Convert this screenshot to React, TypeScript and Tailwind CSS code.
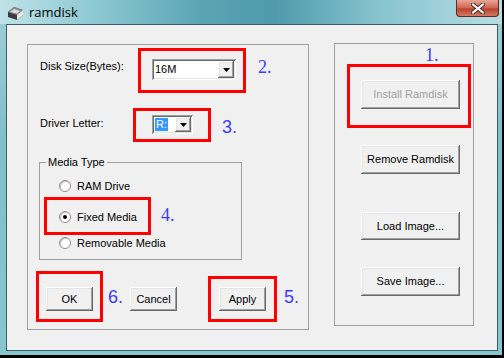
import React from "react"

const font = { fontFamily: '"Liberation Sans", Arial, sans-serif' }

function Btn({ label, className, disabled }: { label: string; className: string; disabled?: boolean }) {
  return (
    <div
      className={`flex items-center justify-center bg-[#f0f0f0] text-[11px] leading-[13px] shadow-[inset_-1px_-1px_0_#696969,inset_1px_1px_0_#ffffff,inset_-2px_-2px_0_#a0a0a0,inset_2px_2px_0_#e3e3e3] ${
        disabled ? "text-[#a0a0a0]" : "text-black"
      } ${className}`}
    >
      {label}
    </div>
  )
}

function DropArrow() {
  return (
    <div className="flex h-full w-[16px] items-center justify-center bg-[#f0f0f0] shadow-[inset_-1px_-1px_0_#696969,inset_1px_1px_0_#ffffff,inset_-2px_-2px_0_#a0a0a0,inset_2px_2px_0_#e3e3e3]">
      <svg width="7" height="4" viewBox="0 0 7 4">
        <path d="M0 0h7L3.5 4z" fill="#000" />
      </svg>
    </div>
  )
}

function Combo({ value, w, h, selected }: { value: string; w: string; h: string; selected?: boolean }) {
  return (
    <div className={`flex ${w} ${h} items-stretch bg-white p-[2px] shadow-[inset_1px_1px_0_#a0a0a0,inset_-1px_-1px_0_#ffffff,inset_2px_2px_0_#696969,inset_-2px_-2px_0_#e3e3e3]`}>
      <div className="flex flex-1 items-center pl-[1px] text-[11px] leading-[13px]">
        <span className={selected ? "bg-[#3399ff] px-[1px] text-white" : ""}>{value}</span>
      </div>
      <DropArrow />
    </div>
  )
}

function Radio({ label, checked }: { label: string; checked?: boolean }) {
  return (
    <div className="flex h-[16px] items-center">
      <div className="flex h-[12px] w-[12px] items-center justify-center rounded-full border border-[#8c8c8c] bg-white shadow-[inset_1px_1px_0_#c8c8c8]">
        {checked && <div className="h-[4px] w-[4px] rounded-full bg-black" />}
      </div>
      <span className="ml-[6px] text-[11px] leading-[13px]">{label}</span>
    </div>
  )
}

function Num({ n, serif, className }: { n: string; serif?: boolean; className: string }) {
  return (
    <div
      className={`text-[18px] leading-[18px] text-[#3a3aff] ${className}`}
      style={{ fontFamily: serif ? '"Liberation Serif", serif' : '"Liberation Sans", sans-serif' }}
    >
      {n}
    </div>
  )
}

export default function App() {
  return (
    <div className="h-[358px] w-[504px] overflow-hidden bg-black" style={font}>
      <div className="flex h-[355px] w-[502px] flex-col bg-[linear-gradient(to_bottom,#9fd0d8,#7ebfca_40%,#86c6cf)]">
        {/* title bar */}
        <div className="relative flex h-[24px] items-center bg-[linear-gradient(to_right,#c0e2e8,#8fcad4_18%,#5aa4b4_40%,#4f9aab_55%,#85c3ce_75%,#b8dde3)]">
          <svg width="17" height="15" viewBox="0 0 17 15" className="ml-[7px] mt-[2px]">
            <path d="M1 6 L7 1 L16 4 L16 9 L10 14 L1 11 Z" fill="#3b3b3b" />
            <path d="M1 6 L7 1 L16 4 L10 9 Z" fill="#8a8a8a" />
            <path d="M3 6 L7 3 L13 5 L10 7.5 Z" fill="#dcdcdc" />
            <path d="M10 9 L16 4 L16 9 L10 14 Z" fill="#e8e8e8" />
          </svg>
          <span className="ml-[5px] text-[13px] leading-[15px] text-black" style={{ fontFamily: '"Open Sans", "Liberation Sans", sans-serif' }}>
            ramdisk
          </span>
          <div className="ml-auto mr-[3px] flex h-[17px] w-[43px] items-center justify-center self-start rounded-b-[4px] border border-t-0 border-[#5e2a22] bg-[linear-gradient(to_bottom,#e9a595,#cf6450_50%,#b8412c_55%,#d37a64)]">
            <svg width="14" height="11" viewBox="0 0 14 11">
              <path d="M2 1.5 L12 9.5 M12 1.5 L2 9.5" stroke="#4a2a24" strokeWidth="4" strokeLinecap="square" />
              <path d="M2 1.5 L12 9.5 M12 1.5 L2 9.5" stroke="#ffffff" strokeWidth="2" strokeLinecap="square" />
            </svg>
          </div>
        </div>

        {/* client area */}
        <div className="ml-[6px] flex h-[327px] w-[492px] items-start border border-[#3d5d63] bg-[#f0f0f0] text-black">
          {/* left group */}
          <div className="ml-[20px] mt-[19px] flex h-[286px] w-[282px] flex-col border border-[#a0a0a0]">
            <div className="flex items-start">
              <div className="w-[110px] pl-[12px] pt-[15px] text-[11px] leading-[13px]">Disk Size(Bytes):</div>
              <div className="mt-[3px] h-[45px] w-[108px] border-[3px] border-[#ff0000] pl-[11px] pt-[8px]">
                <Combo value="16M" w="w-[84px]" h="h-[21px]" />
              </div>
              <Num n="2." serif className="ml-[12px] mt-[13px]" />
            </div>

            <div className="mt-[15px] flex items-start">
              <div className="w-[105px] pl-[12px] pt-[9px] text-[11px] leading-[13px]">Driver Letter:</div>
              <div className="h-[34px] w-[78px] border-[3px] border-[#ff0000] pl-[16px] pt-[4px]">
                <Combo value="R:" w="w-[41px]" h="h-[19px]" selected />
              </div>
              <Num n="3." className="ml-[11px] mt-[10px]" />
            </div>

            <fieldset className="ml-[11px] mt-[14px] h-[104px] w-[203px] border border-[#a0a0a0] px-0">
              <legend className="ml-[6px] px-[2px] text-[11px] leading-[13px]">Media Type</legend>
              <div className="mt-[9px] pl-[19px]">
                <Radio label="RAM Drive" />
              </div>
              <div className="mt-[3px] flex items-start">
                <div className="ml-[4px] h-[38px] w-[107px] border-[3px] border-[#ff0000] pl-[12px] pt-[9px]">
                  <Radio label="Fixed Media" checked />
                </div>
                <Num n="4." serif className="ml-[10px] mt-[9px]" />
              </div>
              <div className="pl-[19px]">
                <Radio label="Removable Media" />
              </div>
            </fieldset>

            <div className="mt-[11px] flex items-end">
              <div className="ml-[8px] h-[51px] w-[67px] border-[3px] border-[#ff0000] pl-[7px] pt-[13px]">
                <Btn label="OK" className="h-[24px] w-[47px]" />
              </div>
              <Num n="6." className="mb-[16px] ml-[5px] w-[22px]" />
              <Btn label="Cancel" className="mb-[11px] h-[24px] w-[47px]" />
              <div className="ml-[31px] h-[46px] w-[69px] border-[3px] border-[#ff0000] pl-[8px] pt-[8px]">
                <Btn label="Apply" className="h-[24px] w-[47px]" />
              </div>
              <Num n="5." className="mb-[16px] ml-[7px]" />
            </div>
          </div>

          {/* right group */}
          <div className="ml-[25px] mt-[18px] flex h-[283px] w-[140px] flex-col items-start border border-[#a0a0a0]">
            <Num n="1." serif className="ml-[90px] mt-[2px]" />
            <div className="ml-[12px] mt-[0px] h-[64px] w-[124px] border-[3px] border-[#ff0000] pl-[11px] pt-[13px]">
              <Btn label="Install Ramdisk" disabled className="h-[29px] w-[99px]" />
            </div>
            <Btn label="Remove Ramdisk" className="ml-[26px] mt-[17px] h-[29px] w-[99px]" />
            <Btn label="Load Image..." className="ml-[26px] mt-[38px] h-[28px] w-[99px]" />
            <Btn label="Save Image..." className="ml-[26px] mt-[27px] h-[29px] w-[99px]" />
          </div>
        </div>
      </div>
    </div>
  )
}
